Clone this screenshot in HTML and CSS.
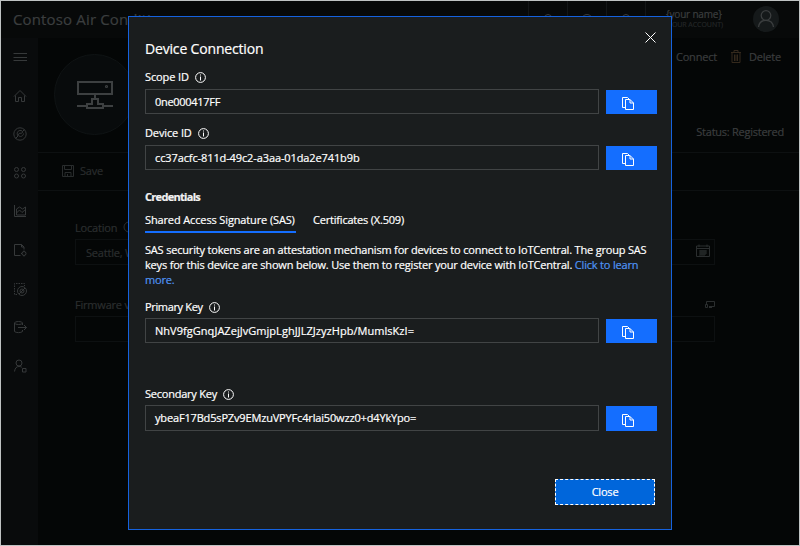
FILE: index.html
```html
<!DOCTYPE html>
<html lang="en">
<head>
<meta charset="utf-8">
<title>Device Connection</title>
<link rel="stylesheet" href="styles.css">
</head>
<body>
<div class="app">
  <header class="topbar">
    <h1 class="brand">Contoso Air Conditi</h1>
    <div class="tools">
      <span class="tool"><svg width="12" height="12" viewBox="0 0 12 12"><circle cx="6" cy="4" r="3.5"/></svg></span>
      <span class="tool"><svg width="12" height="12" viewBox="0 0 12 12"><circle cx="6" cy="6" r="5.5"/></svg></span>
      <span class="tool"><svg width="12" height="12" viewBox="0 0 12 12"><circle cx="6" cy="4" r="3.5"/></svg></span>
    </div>
    <div class="account">
      <div class="who"><span class="name">{your name}</span><span class="org">(YOUR ACCOUNT)</span></div>
      <div class="avatar"><svg width="26" height="26" viewBox="0 0 26 26"><circle cx="13" cy="9.500" r="4.800"/><path d="M5.500 21c.5-4 3-6.700 7.500-6.700s7 2.700 7.500 6.700"/></svg></div>
    </div>
  </header>
  <div class="shell">
    <nav class="sidebar">
      <svg width="14" height="14" viewBox="0 0 14 14"><path d="M.5 3.500h13.500M.5 7.500h13.500M.5 10.500h13.500"/></svg>
      <svg width="14" height="14" viewBox="0 0 14 14"><path d="M1 7.500 7 1.500l6 6M2.500 6.500v6h3v-4h3v4h3v-6"/></svg>
      <svg width="14" height="14" viewBox="0 0 14 14"><circle cx="7" cy="7" r="6.200"/><path d="M2.500 11.500 5 9M9.500 4.500l2-2M5 9C3 6 5 3 8 3.500c2 .5 2 2 1 2.500s-3 0-3.500 1S6 9.500 7.500 9.500s3-1.500 3-3"/></svg>
      <svg width="14" height="14" viewBox="0 0 14 14"><circle cx="3.500" cy="3.500" r="2"/><circle cx="10.500" cy="3.500" r="2"/><circle cx="3.500" cy="10" r="2"/><circle cx="10.500" cy="10" r="2"/></svg>
      <svg width="14" height="14" viewBox="0 0 14 14"><path d="M1.500 1v11.500H13M3.500 11V5l3-2 3 2 3-2v8z"/><path d="M3.500 9l3-3 2.500 2.500 3.500-3"/></svg>
      <svg width="14" height="14" viewBox="0 0 14 14"><path d="M7.500 12.500h-6v-11h7l2.500 2.500v2.500M8.500 1.500V4H11"/><circle cx="11" cy="10.500" r="2"/><path d="M11 7.500v1M11 12.500v1M8 10.500h1"/></svg>
      <svg width="14" height="14" viewBox="0 0 14 14"><path stroke-dasharray="1.500 1" d="M4 12.500H1.500v-11h10V4"/><circle cx="9" cy="9" r="4.500"/><circle cx="9" cy="9" r="2"/><path d="M6 12l6-6"/></svg>
      <svg width="14" height="14" viewBox="0 0 14 14"><ellipse cx="5.500" cy="3" rx="4" ry="1.500"/><path d="M1.500 3v8.500c1.500 1.500 6.500 1.500 8 0V10M9.500 3v2M5 7.500h8.500M11 5l2.500 2.500L11 10"/></svg>
      <svg width="14" height="14" viewBox="0 0 14 14"><circle cx="6" cy="4" r="3"/><path d="M1.500 12.500C2 9 3.500 7.500 6 7.500c1.500 0 2.500.5 3 1M9.500 9.500h3.500V13H9.500z"/></svg>
    </nav>
    <main class="main">
      <section class="hero">
        <div class="device"><svg width="38" height="30" viewBox="0 0 38 30"><path d="M2 2h34v12H2zM19 14v5M1 26h10M27 26h10M11 28v-4h5v-5h6v5h5v4z"/><circle cx="30.500" cy="6.500" r=".6"/></svg></div>
        <div class="heroside">
          <div class="actions">
            <span class="connect">Connect</span>
            <svg class="trash" width="12" height="13" viewBox="0 0 12 13"><path d="M1 2.500h10M4 2V.5h4V2M2 3v9.500h8V3M4.500 4.500V11M6 4.500V11M7.500 4.500V11"/></svg>
            <span class="delete">Delete</span>
          </div>
          <div class="status">Status: Registered</div>
        </div>
      </section>
      <section class="savebar">
        <svg width="12" height="12" viewBox="0 0 12 12"><path d="M.5.5h11v11h-11zM2.500.5v4h7v-4M3 11.500V7.500h6v4M5.500 9v2"/></svg>
        <span>Save</span>
      </section>
      <section class="form">
        <div class="flabel"><span>Location</span><svg width="12" height="12" viewBox="0 0 12 12"><circle cx="6" cy="6" r="5"/></svg></div>
        <div class="fbox"><span>Seattle, W</span><svg width="14" height="14" viewBox="0 0 14 14"><path d="M.5 2h13v10.500H.5zM.5 4.500h13M3 .5V3M11 .5V3M3 7h8M3 9h8M3 11h6M5 6v5M7 6v5M9 6v5"/></svg></div>
        <div class="flabel second"><span>Firmware v</span><svg width="10" height="8" viewBox="0 0 10 8"><path d="M1.500 3V.5h8v5H4M.5 3.500h2v3h-2zM4 6.500h3"/></svg></div>
        <div class="fbox"></div>
      </section>
    </main>
  </div>
  <div class="overlay">
    <div class="modal" role="dialog">
      <button class="dismiss" aria-label="Dismiss"><svg width="11" height="11" viewBox="0 0 11 11"><path d="M.5.5l10 10M10.500.5l-10 10"/></svg></button>
      <h2 class="title">Device Connection</h2>
      <div class="label"><span class="t-scope">Scope ID</span><svg class="info" width="11" height="11" viewBox="0 0 11 11"><circle cx="5.500" cy="5.500" r="4.900"/><path d="M5.500 2.500v1M5.500 4.500v4"/></svg></div>
      <div class="field"><div class="value t-sid">0ne000417FF</div><button class="copy"><svg width="12" height="13" viewBox="0 0 12 13"><path d="M3 10.500H.5v-10h5l2 2M3.500 2.500h4.500l3.500 3.500v6.500h-8zM8 2.500V6h3.500"/></svg></button></div>
      <div class="label l-device"><span class="t-device">Device ID</span><svg class="info" width="11" height="11" viewBox="0 0 11 11"><circle cx="5.500" cy="5.500" r="4.900"/><path d="M5.500 2.500v1M5.500 4.500v4"/></svg></div>
      <div class="field"><div class="value t-did">cc37acfc-811d-49c2-a3aa-01da2e741b9b</div><button class="copy"><svg width="12" height="13" viewBox="0 0 12 13"><path d="M3 10.500H.5v-10h5l2 2M3.500 2.500h4.500l3.500 3.500v6.500h-8zM8 2.500V6h3.500"/></svg></button></div>
      <h3 class="credentials">Credentials</h3>
      <div class="tabs"><span class="tab active">Shared Access Signature (SAS)</span><span class="tab t-cert">Certificates (X.509)</span></div>
      <p class="copytext">SAS security tokens are an attestation mechanism for devices to connect to IoTCentral. The group SAS<br>keys for this device are shown below. Use them to register your device with IoTCentral. <a>Click to learn</a><br><a>more.</a></p>
      <div class="label l-primary"><span class="t-primary">Primary Key</span><svg class="info" width="11" height="11" viewBox="0 0 11 11"><circle cx="5.500" cy="5.500" r="4.900"/><path d="M5.500 2.500v1M5.500 4.500v4"/></svg></div>
      <div class="field"><div class="value t-pk">NhV9fgGnqJAZejJvGmjpLghJJLZJzyzHpb/MumlsKzI=</div><button class="copy"><svg width="12" height="13" viewBox="0 0 12 13"><path d="M3 10.500H.5v-10h5l2 2M3.500 2.500h4.500l3.500 3.500v6.500h-8zM8 2.500V6h3.500"/></svg></button></div>
      <div class="label l-secondary"><span class="t-secondary">Secondary Key</span><svg class="info" width="11" height="11" viewBox="0 0 11 11"><circle cx="5.500" cy="5.500" r="4.900"/><path d="M5.500 2.500v1M5.500 4.500v4"/></svg></div>
      <div class="field tall"><div class="value t-skey">ybeaF17Bd5sPZv9EMzuVPYFc4rlai50wzz0+d4YkYpo=</div><button class="copy"><svg width="12" height="13" viewBox="0 0 12 13"><path d="M3 10.500H.5v-10h5l2 2M3.500 2.500h4.500l3.500 3.500v6.500h-8zM8 2.500V6h3.500"/></svg></button></div>
      <button class="close">Close</button>
    </div>
  </div>
</div>
</body>
</html>
```
FILE: styles.css
```css
* { box-sizing: border-box; }
body { margin: 0; font-family: "Open Sans", "Noto Sans", sans-serif; font-size: 11px; color: #3b3d3e; background: #040606; -webkit-text-stroke: .2px currentColor; }
svg { display: block; flex: none; fill: none; stroke: currentColor; }
h1, h2, h3, p { margin: 0; font-weight: 400; }
button { font: inherit; border: 0; padding: 0; color: #fff; }
.app { position: relative; width: 800px; height: 546px; border: 1px solid #bfc3c3; display: flex; flex-direction: column; overflow: hidden; white-space: nowrap; }

.topbar { height: 37px; background: #070909; display: flex; flex: none; }
.brand { font-size: 15px; line-height: 37px; padding-left: 12px; width: 527px; letter-spacing: .15px; color: #3b3e3f; }
.tools { display: flex; }
.tool { width: 39px; border-left: 1px solid #131617; display: flex; justify-content: center; padding-top: 13px; }
.tool:last-child { width: 40px; border-right: 1px solid #131617; }
.account { display: flex; flex: 1; justify-content: space-between; padding: 5px 20px 0 20px; }
.who { display: flex; flex-direction: column; color: #3b3e3f; }
.name { font-size: 10px; line-height: 16px; letter-spacing: -.2px; }
.org { font-size: 7px; line-height: 5px; letter-spacing: -.05px; color: #232627; }
.avatar { width: 26px; height: 26px; border-radius: 50%; background: #15191a; color: #3b3e3f; }
.avatar svg { stroke-width: 1.300; }

.shell { display: flex; flex: 1; }
.sidebar { width: 37px; background: #090b0c; color: #36393a; display: flex; flex-direction: column; align-items: center; padding-top: 12px; gap: 24.600px; }
.main { flex: 1; display: flex; flex-direction: column; }
.hero { height: 115px; display: flex; justify-content: space-between; padding: 16px 15px 0 16px; border-bottom: 1px solid #0d1011; }
.device { width: 81px; height: 81px; border: 1px solid #0f1314; border-radius: 50%; background: #080b0c; color: #3d4041; display: flex; align-items: center; justify-content: center; }
.device svg { stroke-width: 2; }
.heroside { display: flex; flex-direction: column; align-items: flex-end; justify-content: space-between; padding-bottom: 12px; }
.actions { display: flex; align-items: center; height: 16px; margin-top: -6px; padding-right: 3px; letter-spacing: -.2px; }
.trash { margin: 0 7px 0 13px; color: #34291c; }
.status { line-height: 16px; letter-spacing: -.25px; }
.savebar { height: 38px; border-bottom: 1px solid #0d1011; display: flex; align-items: center; gap: 6px; padding: 0 0 2px 24px; color: #292c2d; letter-spacing: -.2px; }
.form { width: 677px; padding: 28px 0 0 37px; color: #2b2e2f; letter-spacing: -.2px; }
.flabel { display: flex; align-items: center; gap: 6px; height: 16px; margin-bottom: 4px; }
.flabel.second { margin-top: 32px; margin-bottom: 3px; justify-content: space-between; }
.flabel.second span { margin-top: -1px; }
.flabel.second svg { margin-top: -1px; }
.fbox { height: 26px; border: 1px solid #0d1011; display: flex; align-items: center; justify-content: space-between; padding: 0 4px 0 10px; }
.fbox svg { margin-top: -3px; }

.overlay { position: absolute; inset: 0; display: flex; justify-content: center; padding-top: 15px; }
.modal { position: relative; width: 544px; height: 514px; background: #1a1d1e; border: 1px solid #1562de; color: #fff; padding: 22px 14px 0 16px; display: flex; flex-direction: column; }
.dismiss { position: absolute; top: 15px; right: 15px; background: none; }
.title { font-size: 14px; line-height: 20px; margin-bottom: 10px; letter-spacing: -.17px; }
.label { display: flex; align-items: center; gap: 6px; height: 16px; margin-bottom: 4px; }
.label span { margin-top: -1px; }
.l-device { margin-top: 11px; }
.field { display: flex; align-items: flex-end; gap: 7px; height: 25px; }
.value { width: 454px; height: 100%; border: 1px solid #414445; padding-left: 9px; line-height: 24px; }
.copy { width: 51px; height: calc(100% - 1px); background: #146eff; display: flex; align-items: center; padding-left: 16px; padding-top: 3px; }
.credentials { font-size: 11px; line-height: 16px; font-weight: 700; margin-top: 19px; color: #f2f2f2; letter-spacing: -.7px; }
.tabs { display: flex; gap: 17px; margin-top: 7px; letter-spacing: -.13px; }
.tab { height: 21px; line-height: 16px; border-bottom: 2px solid transparent; }
.tab.active { border-color: #146eff; width: 151px; }
.copytext { line-height: 15px; margin-top: 9px; margin-bottom: 1px; letter-spacing: -.185px; }
.copytext a { color: #4f94f5; }
.l-primary { margin-top: 11px; margin-bottom: 3px; }
.l-secondary { margin-top: 43px; margin-bottom: 3px; }
.field.tall { height: 26px; }
.close { align-self: flex-end; width: 100px; height: 26px; margin-top: 48px; margin-right: 2px; background: #0066db; border: 1px dashed #fff; line-height: 24px; letter-spacing: -.2px; }

.t-scope, .t-device { letter-spacing: -.12px; }
.t-primary { letter-spacing: -.35px; }
.t-secondary { letter-spacing: -.23px; }
.t-cert { letter-spacing: -.2px; }
.t-sid { letter-spacing: -.3px; }
.t-did { letter-spacing: -.11px; }
.t-pk { letter-spacing: .04px; }
.t-skey { letter-spacing: -.16px; }
```
